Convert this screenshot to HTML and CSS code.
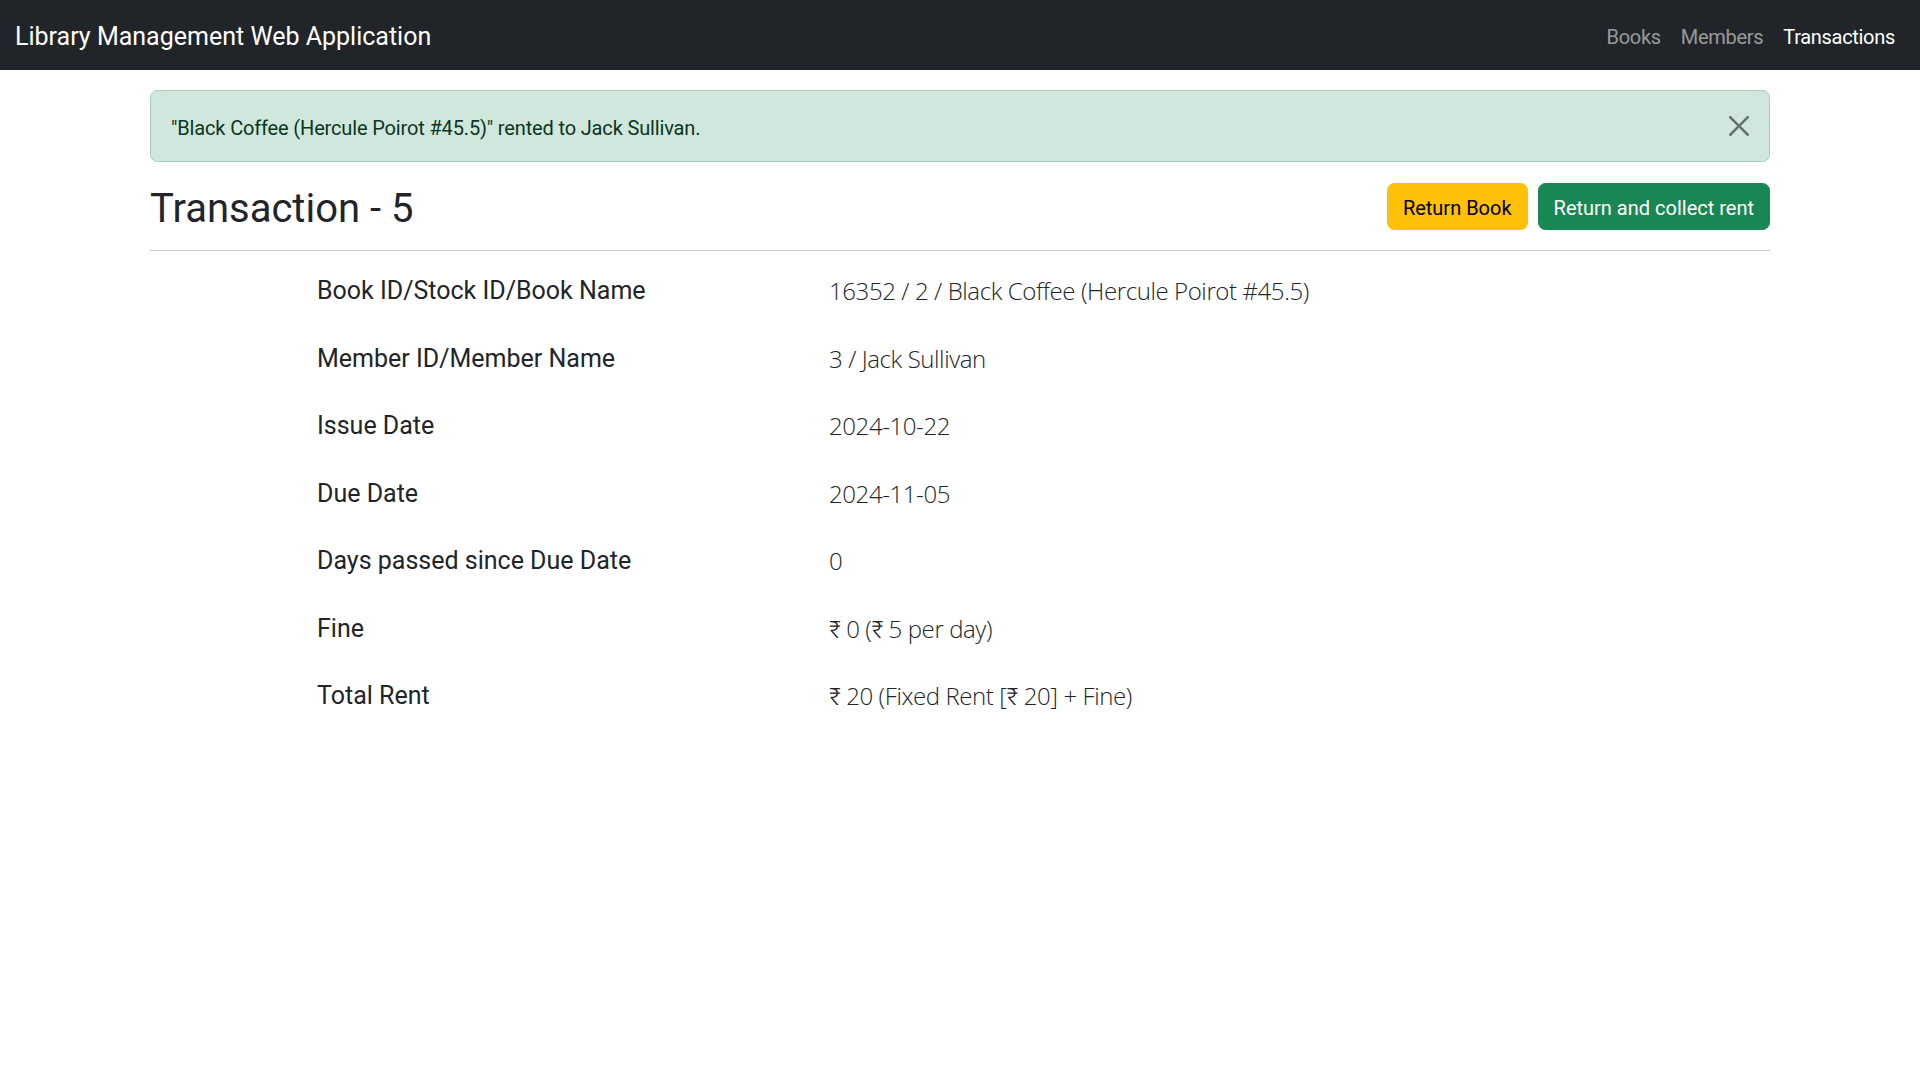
FILE: index.html
```html
<!DOCTYPE html>
<html lang="en">
<head>
<meta charset="utf-8">
<title>Library Management Web Application</title>
<link rel="stylesheet" href="styles.css">
</head>
<body>
<nav class="navbar">
  <div class="navbar-inner">
    <a class="brand" href="#">Library Management Web Application</a>
    <ul class="nav">
      <li><a class="nav-link" href="#">Books</a></li>
      <li><a class="nav-link" href="#">Members</a></li>
      <li><a class="nav-link active" href="#">Transactions</a></li>
    </ul>
  </div>
</nav>
<main class="container">
  <div class="alert">
    "Black Coffee (Hercule Poirot #45.5)" rented to Jack Sullivan.
    <button class="btn-close" type="button" aria-label="Close">
      <svg viewBox="0 0 16 16" width="20" height="20"><path d="M.293.293a1 1 0 0 1 1.414 0L8 6.586 14.293.293a1 1 0 1 1 1.414 1.414L9.414 8l6.293 6.293a1 1 0 0 1-1.414 1.414L8 9.414l-6.293 6.293a1 1 0 0 1-1.414-1.414L6.586 8 .293 1.707a1 1 0 0 1 0-1.414z"/></svg>
    </button>
  </div>
  <div class="header">
    <h2 class="title">Transaction - 5</h2>
    <div class="actions">
      <button class="btn btn-warning" type="button">Return Book</button>
      <button class="btn btn-success" type="button">Return and collect rent</button>
    </div>
  </div>
  <hr class="divider">
  <div class="details">
    <div class="label">Book ID/Stock ID/Book Name</div>
    <div class="value">16352 / 2 / Black Coffee (Hercule Poirot #45.5)</div>
    <div class="label">Member ID/Member Name</div>
    <div class="value">3 / Jack Sullivan</div>
    <div class="label">Issue Date</div>
    <div class="value">2024-10-22</div>
    <div class="label">Due Date</div>
    <div class="value">2024-11-05</div>
    <div class="label">Days passed since Due Date</div>
    <div class="value">0</div>
    <div class="label">Fine</div>
    <div class="value">₹ 0 (₹ 5 per day)</div>
    <div class="label">Total Rent</div>
    <div class="value">₹ 20 (Fixed Rent [₹ 20] + Fine)</div>
  </div>
</main>
</body>
</html>
```
FILE: styles.css
```css
* { box-sizing: border-box; }
html, body { margin: 0; padding: 0; }
body {
  font-family: Roboto, "Liberation Sans", sans-serif;
  font-size: 20px;
  line-height: 30px;
  color: #212529;
  background: #fff;
}
a { text-decoration: none; }

.navbar {
  background: #212529;
  padding: 10px 0;
}
.navbar-inner {
  display: flex;
  align-items: center;
  justify-content: space-between;
  padding: 0 15px;
}
.brand {
  color: #fff;
  font-size: 25px;
  line-height: 37.5px;
  padding: 8.25px 0 4.25px;
}
.nav {
  display: flex;
  list-style: none;
  margin: 0;
  padding: 0;
}
.nav-link {
  display: block;
  padding: 11.5px 10px 8.5px;
  font-size: 20px;
  line-height: 30px;
  letter-spacing: -0.3px;
  color: rgba(255, 255, 255, 0.55);
}
.nav-link.active { color: #fff; }

.container {
  max-width: 1650px;
  margin: 0 auto;
  padding: 0 15px;
}

.alert {
  position: relative;
  margin-top: 20px;
  margin-bottom: 20px;
  padding: 21.5px 60px 18.5px 20px;
  background: #d1e7dd;
  border: 1px solid #a3cfbb;
  border-radius: 7.5px;
  color: #0a3622;
  letter-spacing: -0.15px;
}
.btn-close {
  position: absolute;
  top: 0;
  right: 0;
  padding: 25px 20px;
  width: 60px;
  height: 70px;
  border: 0;
  background: transparent;
  opacity: 0.5;
  display: flex;
  align-items: center;
  justify-content: center;
  cursor: pointer;
}
.btn-close svg { display: block; fill: #000; }

.header {
  display: flex;
  align-items: center;
  justify-content: space-between;
}
.title {
  margin: 0;
  height: 48px;
  padding-top: 3px;
  font-size: 40px;
  line-height: 48px;
  font-weight: 400;
}
.actions { display: flex; gap: 10px; }
.btn {
  font-family: inherit;
  font-size: 20px;
  line-height: 30px;
  padding: 9px 15px 6px;
  border: 1px solid transparent;
  border-radius: 7.5px;
  cursor: pointer;
}
.btn-warning { background: #ffc107; border-color: #ffc107; color: #000; }
.btn-success { background: #198754; border-color: #198754; color: #fff; }

.divider {
  margin: 20px 0;
  border: 0;
  border-top: 1px solid rgba(33, 37, 41, 0.25);
}

.details {
  display: grid;
  grid-template-columns: 512px auto;
  row-gap: 30px;
  padding: 1px 0 0 167px;
}
.label {
  font-size: 25px;
  line-height: 37.5px;
}
.value {
  font-family: "Open Sans", Roboto, sans-serif;
  font-weight: 300;
  font-size: 24px;
  letter-spacing: -0.4px;
  line-height: 37.5px;
}
```
